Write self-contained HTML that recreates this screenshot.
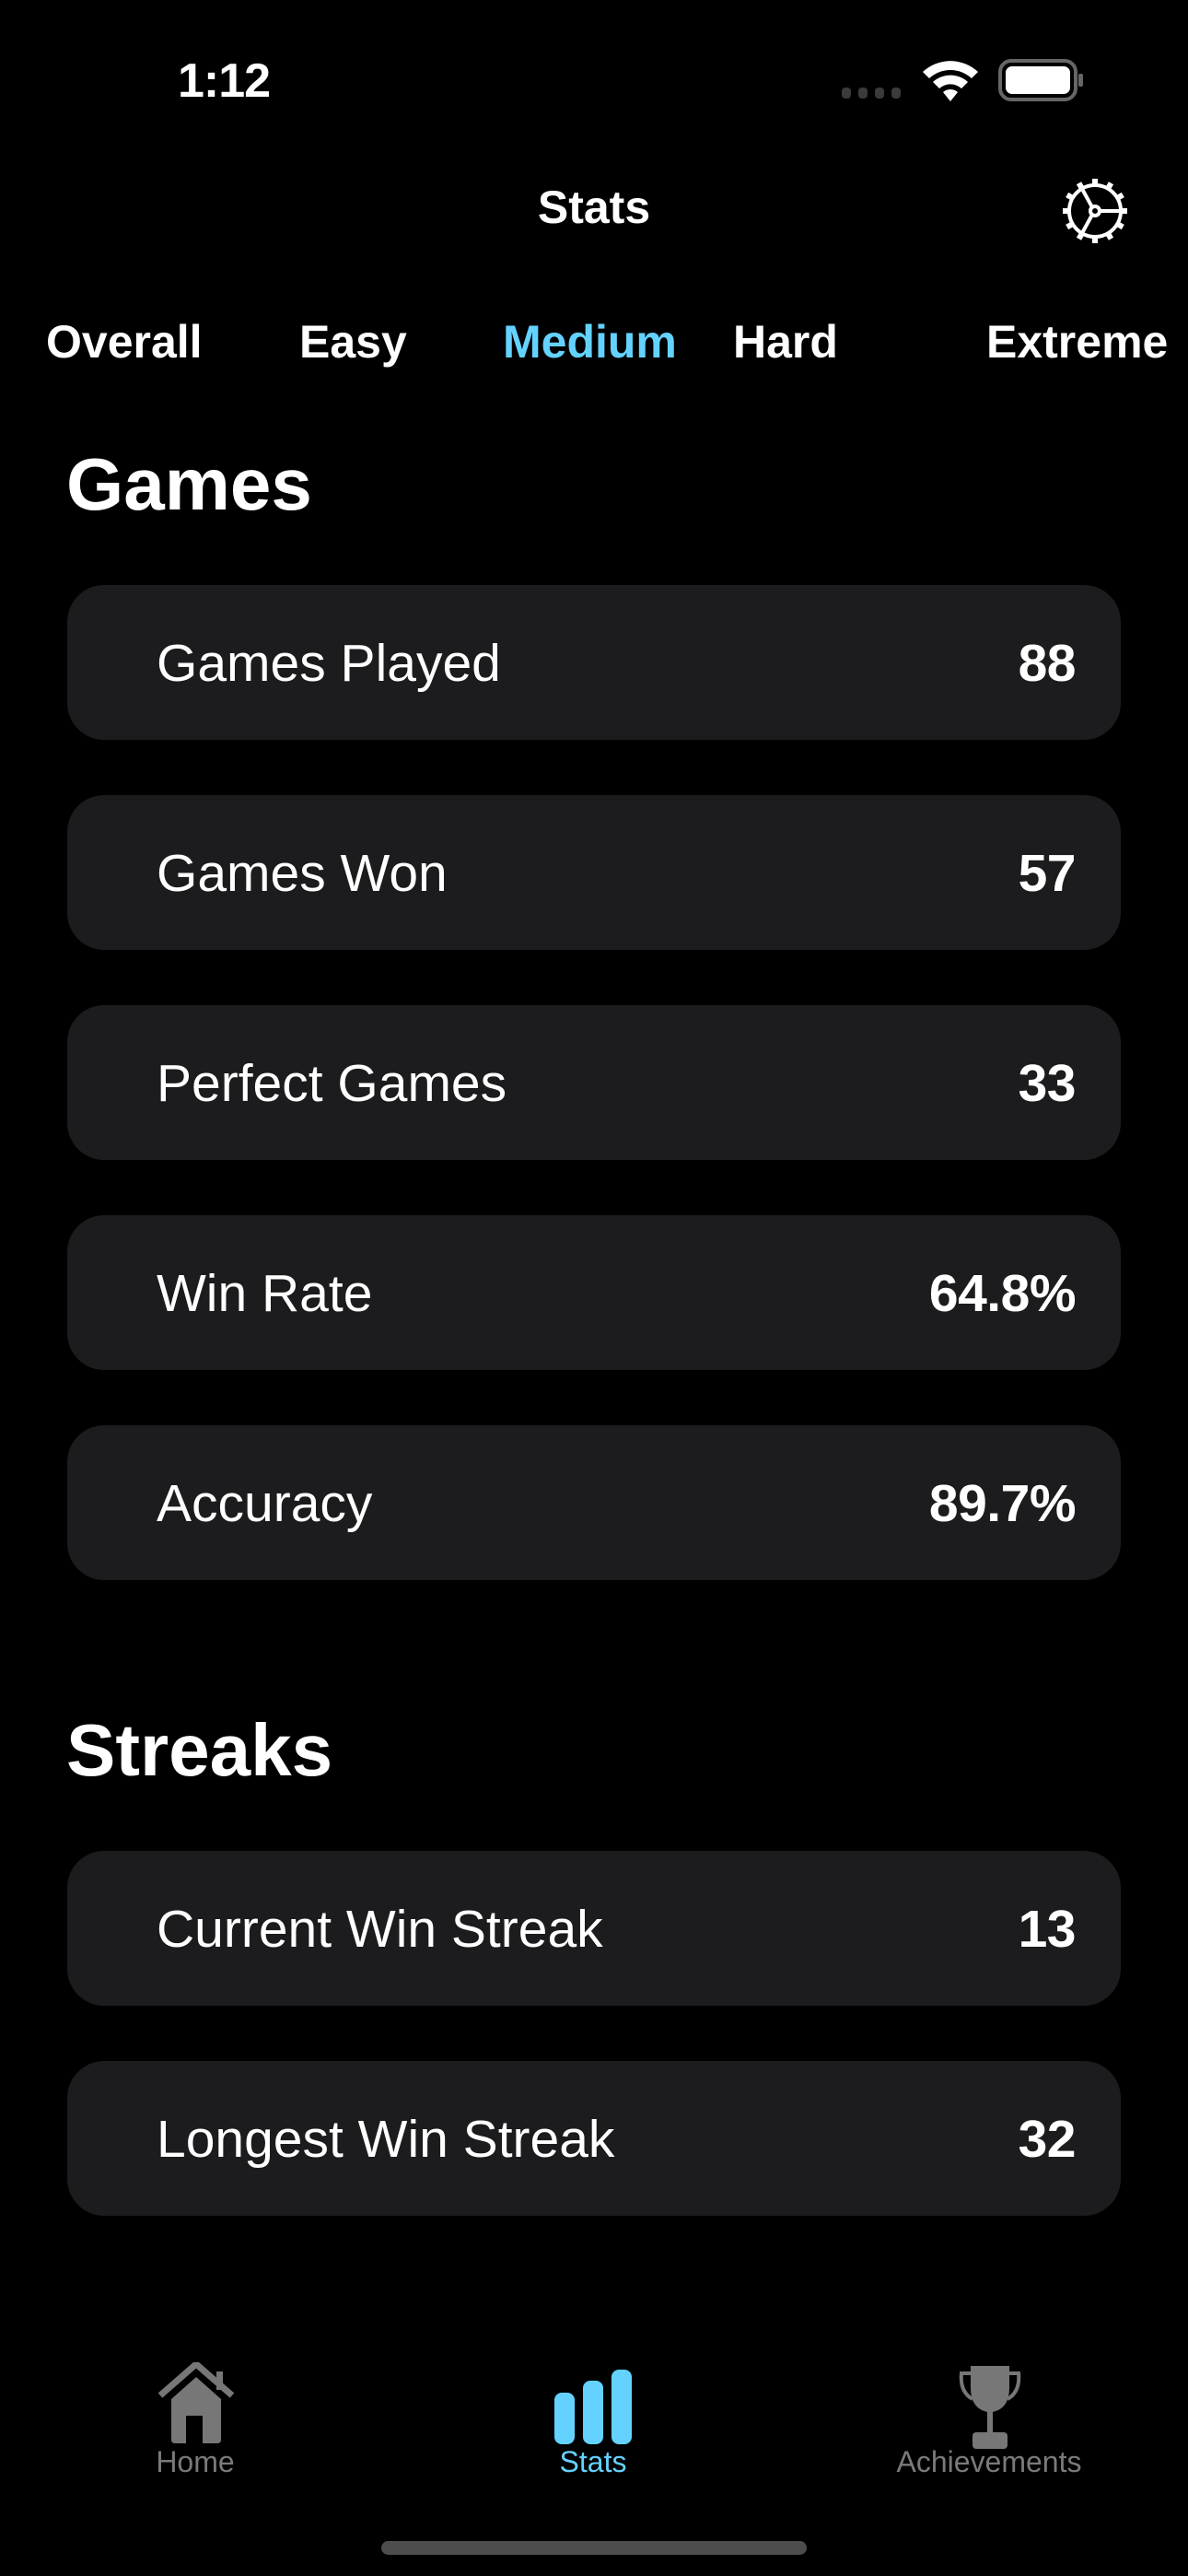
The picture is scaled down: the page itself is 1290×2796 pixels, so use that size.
<!DOCTYPE html>
<html><head><meta charset="utf-8"><style>
*{margin:0;padding:0;box-sizing:border-box}
html,body{width:1290px;height:2796px;background:#000;overflow:hidden}
body{position:relative;font-family:"Liberation Sans",sans-serif;color:#fff}
.abs{position:absolute}
.time{left:193px;top:58px;font-size:52px;font-weight:600;letter-spacing:-1px}
.title{left:0;width:1290px;text-align:center;top:196px;font-size:50px;font-weight:600}
.tab{top:342px;font-size:50px;font-weight:600}
h1{position:absolute;left:72px;font-size:80px;font-weight:700}
.card{position:absolute;left:73px;width:1144px;height:168px;background:#1c1c1e;border-radius:40px}
.card .l{position:absolute;left:97px;top:52px;font-size:57px}
.card .v{position:absolute;right:49px;top:52px;font-size:57px;font-weight:600;letter-spacing:-0.5px}
.tl{font-size:32px;color:#7a7a7a;top:2654px;width:300px;text-align:center}
</style></head><body>
<div class="abs time">1:12</div>
<svg class="abs" style="left:912px;top:92px" width="70" height="18"><g fill="#3a3a3c"><rect x="2" y="3" width="10" height="12" rx="4"/><rect x="20" y="3" width="10" height="12" rx="4"/><rect x="38" y="3" width="10" height="12" rx="4"/><rect x="56" y="3" width="10" height="12" rx="4"/></g></svg>
<svg class="abs" style="left:1000px;top:62px" width="64" height="50" viewBox="0 0 64 50"><g fill="#fff"><path d="M2 16 A44 44 0 0 1 62 16 L55 23 A34 34 0 0 0 9 23Z"/><path d="M13 27 A28 28 0 0 1 51 27 L44 34 A18 18 0 0 0 20 34Z"/><path d="M24 38 A12 12 0 0 1 40 38 L32 48Z"/></g></svg>
<svg class="abs" style="left:1084px;top:64px" width="96" height="48"><rect x="2" y="2" width="82" height="42" rx="12" fill="none" stroke="#666" stroke-width="4"/><rect x="8" y="8" width="70" height="30" rx="7" fill="#fff"/><rect x="87" y="16" width="5" height="14" rx="2" fill="#666"/></svg>
<div class="abs title">Stats</div>
<svg class="abs" style="left:1152px;top:192px" width="74" height="74" viewBox="-37 -37 74 74"><g stroke="#fff" stroke-width="4" fill="none"><circle r="28"/><circle r="5"/><line x1="5" y1="0" x2="28" y2="0"/><line x1="-3" y1="-4" x2="-14" y2="-24"/><line x1="-3" y1="4" x2="-14" y2="24"/></g><g fill="#fff"><path d="M-3 -35h6v7h-6z" transform="rotate(0)"/><path d="M-3 -35h6v7h-6z" transform="rotate(30)"/><path d="M-3 -35h6v7h-6z" transform="rotate(60)"/><path d="M-3 -35h6v7h-6z" transform="rotate(90)"/><path d="M-3 -35h6v7h-6z" transform="rotate(120)"/><path d="M-3 -35h6v7h-6z" transform="rotate(150)"/><path d="M-3 -35h6v7h-6z" transform="rotate(180)"/><path d="M-3 -35h6v7h-6z" transform="rotate(210)"/><path d="M-3 -35h6v7h-6z" transform="rotate(240)"/><path d="M-3 -35h6v7h-6z" transform="rotate(270)"/><path d="M-3 -35h6v7h-6z" transform="rotate(300)"/><path d="M-3 -35h6v7h-6z" transform="rotate(330)"/></g></svg>
<div class="abs tab" style="left:50px">Overall</div>
<div class="abs tab" style="left:325px">Easy</div>
<div class="abs tab" style="left:546px;color:#64d2ff">Medium</div>
<div class="abs tab" style="left:796px">Hard</div>
<div class="abs tab" style="left:1071px">Extreme</div>
<h1 style="top:480px">Games</h1>
<div class="card" style="top:635px"><div class="l">Games Played</div><div class="v">88</div></div>
<div class="card" style="top:863px"><div class="l">Games Won</div><div class="v">57</div></div>
<div class="card" style="top:1091px"><div class="l">Perfect Games</div><div class="v">33</div></div>
<div class="card" style="top:1319px"><div class="l">Win Rate</div><div class="v">64.8%</div></div>
<div class="card" style="top:1547px"><div class="l">Accuracy</div><div class="v">89.7%</div></div>
<h1 style="top:1854px">Streaks</h1>
<div class="card" style="top:2009px"><div class="l">Current Win Streak</div><div class="v">13</div></div>
<div class="card" style="top:2237px"><div class="l">Longest Win Streak</div><div class="v">32</div></div>
<svg class="abs" style="left:170px;top:2564px" width="86" height="90" viewBox="0 0 86 90"><path d="M4 36 L43 2 L82 36" stroke="#777" stroke-width="7" fill="none" stroke-linejoin="round"/><rect x="65" y="10" width="7" height="20" fill="#777"/><path d="M16 40 L43 16 L70 40 V84 Q70 88 66 88 H20 Q16 88 16 84Z" fill="#777"/><rect x="32" y="58" width="18" height="30" fill="#000"/></svg>
<svg class="abs" style="left:600px;top:2572px" width="88" height="84"><rect x="2" y="25" width="22" height="56" rx="8" fill="#64d2ff"/><rect x="33" y="12" width="22" height="69" rx="8" fill="#64d2ff"/><rect x="64" y="0" width="22" height="81" rx="8" fill="#64d2ff"/></svg>
<svg class="abs" style="left:1040px;top:2566px" width="70" height="92" viewBox="0 0 70 92"><path d="M14 2 H56 V26 Q56 48 38 52 V74 H32 V52 Q14 48 14 26Z" fill="#777"/><path d="M14 10 H4 Q2 30 16 38 M56 10 H66 Q68 30 54 38" stroke="#777" stroke-width="4" fill="none"/><rect x="16" y="74" width="38" height="18" rx="4" fill="#777"/></svg>
<div class="abs tl" style="left:62px">Home</div>
<div class="abs tl" style="left:494px;color:#64d2ff">Stats</div>
<div class="abs tl" style="left:924px">Achievements</div>
<div class="abs" style="left:414px;top:2758px;width:462px;height:15px;border-radius:8px;background:#4d4d4d"></div>
</body></html>
